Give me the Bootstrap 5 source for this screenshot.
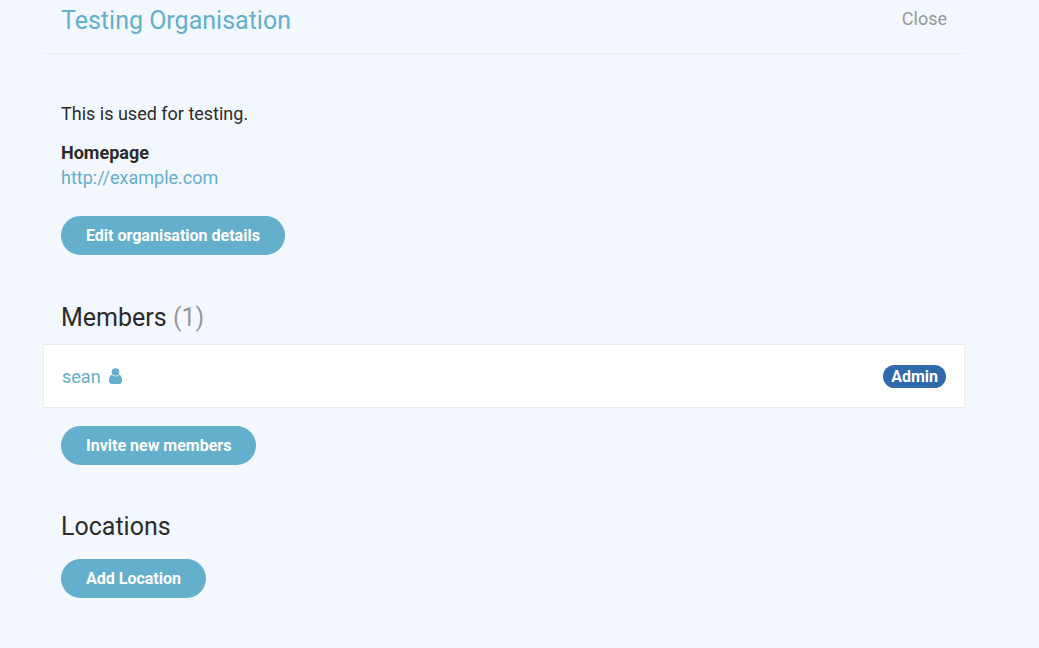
<!DOCTYPE html>
<html lang="en">
<head>
<meta charset="utf-8">
<meta name="viewport" content="width=device-width, initial-scale=1">
<title>Testing Organisation</title>
<link rel="stylesheet" href="https://cdn.jsdelivr.net/npm/bootstrap@5.3.0/dist/css/bootstrap.min.css">
<style>
body{background:#f3f8ff;color:#2b2b2b;font-family:Roboto,sans-serif;font-size:18px;line-height:25px}
a{color:#64afcb;text-decoration:none}
.panel{margin-left:43px;margin-right:74px}
.inset{padding-left:18px;padding-right:18px}
h1,h2{font-size:25px;line-height:30px;font-weight:400;margin:0}
h1{color:#64afcb}
.org-head{padding-top:6px;padding-bottom:17px;border-bottom:1px solid #ebebeb}
.muted{color:#999}
.about{padding-top:47px;padding-bottom:1px}
.intro{margin-bottom:14px}
.homepage{margin-bottom:26px}
.btn-org{--bs-btn-color:#fff;--bs-btn-bg:#64afcb;--bs-btn-hover-color:#fff;--bs-btn-hover-bg:#4f9cb9;--bs-btn-border-width:0;--bs-btn-font-weight:700;--bs-btn-font-size:16px;--bs-btn-line-height:23px;--bs-btn-padding-y:8px;--bs-btn-padding-x:25px;--bs-btn-border-radius:20px}
.members-title{margin-bottom:11px}
.locations-title{margin-bottom:17px}
.member{background:#fff;border:1px solid #ebebeb;padding:18px;min-height:64px}
.member-icon{margin-left:4px;vertical-align:-1px}
.role{background:#3169ad;font-size:16px;line-height:23px;padding:0 8px}
.invite{padding-top:18px}
.section-top{padding-top:47px}
</style>
</head>
<body>
<main class="panel">
<header class="org-head inset d-flex justify-content-between">
<h1>Testing Organisation</h1>
<a href="#" class="muted">Close</a>
</header>
<section class="about inset">
<p class="intro">This is used for testing.</p>
<p class="homepage"><strong>Homepage</strong><br><a href="http://example.com">http://example.com</a></p>
<button type="button" class="btn btn-org">Edit organisation details</button>
</section>
<section class="section-top">
<h2 class="inset members-title">Members <span class="muted">(1)</span></h2>
<div class="member d-flex justify-content-between align-items-center">
<a href="#">sean <svg class="member-icon" width="13" height="16" viewBox="0 0 13 16" fill="currentColor" aria-hidden="true"><path d="M3 6.8C1 7.1 0 9.5 0 12.6 0 14.8 1.100 16 2.800 16h7.400c1.700 0 2.800-1.200 2.800-3.400 0-3.100-1-5.500-3-5.800C9.100 7.800 7.900 8.400 6.500 8.400S3.900 7.800 3 6.800z"/><circle cx="6.500" cy="4" r="3.800"/></svg></a>
<span class="badge rounded-pill role">Admin</span>
</div>
<div class="inset invite"><button type="button" class="btn btn-org">Invite new members</button></div>
</section>
<section class="section-top inset">
<h2 class="locations-title">Locations</h2>
<button type="button" class="btn btn-org">Add Location</button>
</section>
</main>
<script src="https://cdn.jsdelivr.net/npm/bootstrap@5.3.0/dist/js/bootstrap.bundle.min.js"></script>
</body>
</html>
